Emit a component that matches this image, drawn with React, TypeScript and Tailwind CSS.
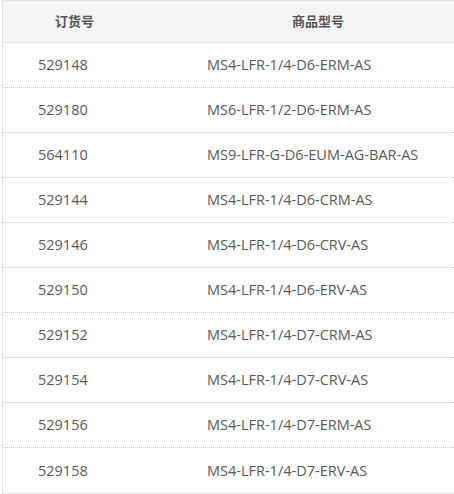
import React from "react";

const rows = [
  { code: "529148", model: "MS4-LFR-1/4-D6-ERM-AS" },
  { code: "529180", model: "MS6-LFR-1/2-D6-ERM-AS" },
  { code: "564110", model: "MS9-LFR-G-D6-EUM-AG-BAR-AS" },
  { code: "529144", model: "MS4-LFR-1/4-D6-CRM-AS" },
  { code: "529146", model: "MS4-LFR-1/4-D6-CRV-AS" },
  { code: "529150", model: "MS4-LFR-1/4-D6-ERV-AS" },
  { code: "529152", model: "MS4-LFR-1/4-D7-CRM-AS" },
  { code: "529154", model: "MS4-LFR-1/4-D7-CRV-AS" },
  { code: "529156", model: "MS4-LFR-1/4-D7-ERM-AS" },
  { code: "529158", model: "MS4-LFR-1/4-D7-ERV-AS" },
];

export default function App() {
  return (
    <div className="w-[454px] h-[494px] bg-white pl-[2px] font-['Open_Sans','Noto_Sans_CJK_SC',sans-serif] text-[#595959]">
      <div className="border-t border-l border-b border-[#e2e2e2]">
        {/* header */}
        <div className="flex h-[42px] items-center bg-[#f4f4f4] border-b border-[#e2e2e2] text-[13px] font-bold text-[#555]">
          <div className="w-[143px] shrink-0 text-center">订货号</div>
          <div className="flex-1 pl-[146px]">商品型号</div>
        </div>

        {rows.map((r, i) => (
          <div
            key={r.code}
            className={`flex h-[45px] items-center text-[14.5px] ${
              i < rows.length - 1 ? "border-b border-dotted border-[#c8c8c8]" : "h-[44px]"
            }`}
          >
            <div className="w-[143px] shrink-0 pl-[35px]">{r.code}</div>
            <div className="flex-1 pl-[61px]">{r.model}</div>
          </div>
        ))}
      </div>
    </div>
  );
}
